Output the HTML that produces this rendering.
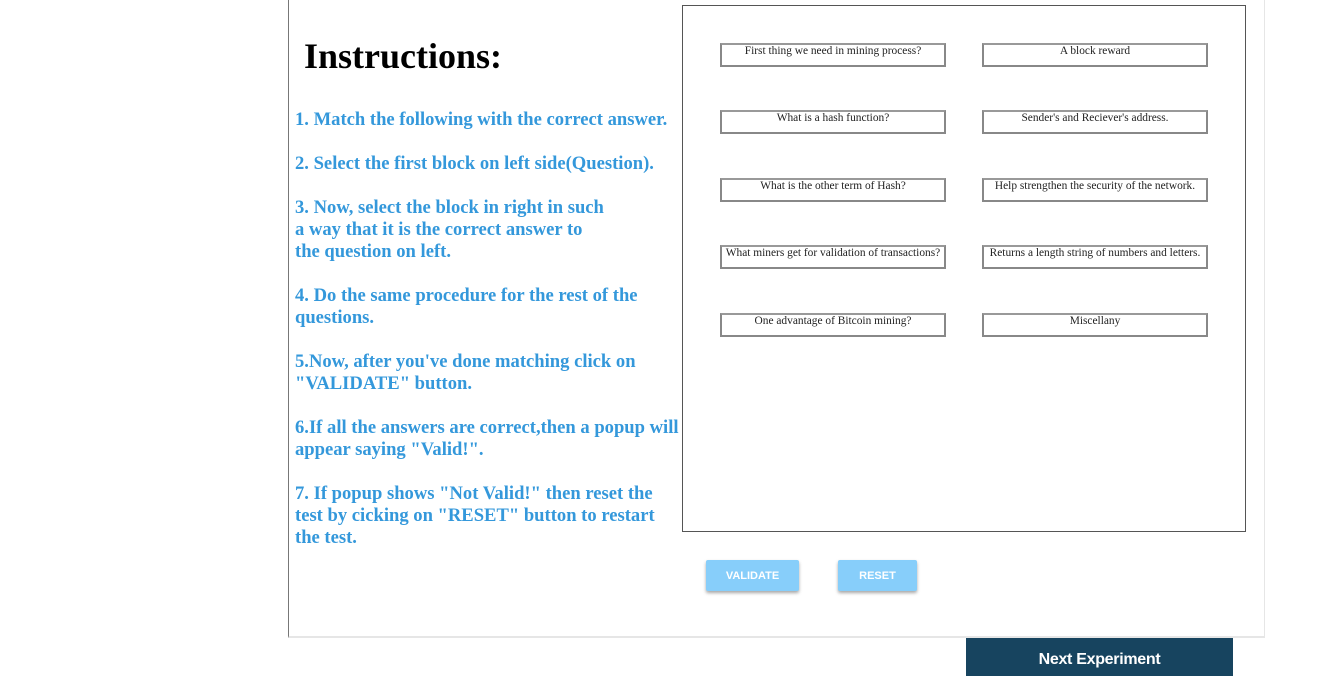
<!DOCTYPE html>
<html><head><style>
body{margin:0;width:1336px;height:676px;background:#fff;position:relative;overflow:hidden;font-family:"Liberation Serif",serif}
.cont{position:absolute;left:288px;top:-2px;width:977px;height:640px;border-left:1px solid #777;border-right:1px solid #e6e6e6;border-bottom:2px solid #e6e6e6;box-sizing:border-box}
h1{position:absolute;left:304px;top:35px;margin:0;font-size:36px;font-weight:bold;line-height:42px}
.ins{position:absolute;left:295px;top:108.5px;color:#3498db;font-weight:bold;font-size:18.6px;line-height:22px;white-space:nowrap}
.box{position:absolute;left:682px;top:5px;width:564px;height:527px;border:1px solid #555;box-sizing:border-box}
.q{position:absolute;width:226px;height:24px;border:2px solid #888;border-top-color:#999;box-sizing:border-box;font-size:11.4px;text-align:center;line-height:13px;color:#222;white-space:nowrap}
.btn{position:absolute;top:560px;height:31px;background:#87cefa;color:#fff;font-family:"Liberation Sans",sans-serif;font-size:11px;font-weight:bold;line-height:32px;text-align:center;border-radius:2px;box-shadow:0 2px 3px rgba(0,0,0,.35)}
.next{position:absolute;left:966px;top:638px;width:267px;height:38px;background:#17445f;color:#fff;font-family:"Liberation Sans",sans-serif;font-weight:bold;font-size:16px;letter-spacing:-0.3px;line-height:43px;text-align:center}
</style></head><body>
<div class="cont"></div>
<h1>Instructions:</h1>
<div class="ins">1. Match the following with the correct answer.<br><br>2. Select the first block on left side(Question).<br><br>3. Now, select the block in right in such<br>a way that it is the correct answer to<br>the question on left.<br><br>4. Do the same procedure for the rest of the<br>questions.<br><br>5.Now, after you've done matching click on<br>"VALIDATE" button.<br><br>6.If all the answers are correct,then a popup will<br>appear saying "Valid!".<br><br>7. If popup shows "Not Valid!" then reset the<br>test by cicking on "RESET" button to restart<br>the test.</div>
<div class="box"></div>
<div class="q" style="left:720px;top:43px">First thing we need in mining process?</div>
<div class="q" style="left:982px;top:43px">A block reward</div>
<div class="q" style="left:720px;top:110px">What is a hash function?</div>
<div class="q" style="left:982px;top:110px">Sender's and Reciever's address.</div>
<div class="q" style="left:720px;top:178px">What is the other term of Hash?</div>
<div class="q" style="left:982px;top:178px">Help strengthen the security of the network.</div>
<div class="q" style="left:720px;top:245px">What miners get for validation of transactions?</div>
<div class="q" style="left:982px;top:245px">Returns a length string of numbers and letters.</div>
<div class="q" style="left:720px;top:313px">One advantage of Bitcoin mining?</div>
<div class="q" style="left:982px;top:313px">Miscellany</div>
<div class="btn" style="left:706px;width:93px">VALIDATE</div>
<div class="btn" style="left:838px;width:79px">RESET</div>
<div class="next">Next Experiment</div>
</body></html>
